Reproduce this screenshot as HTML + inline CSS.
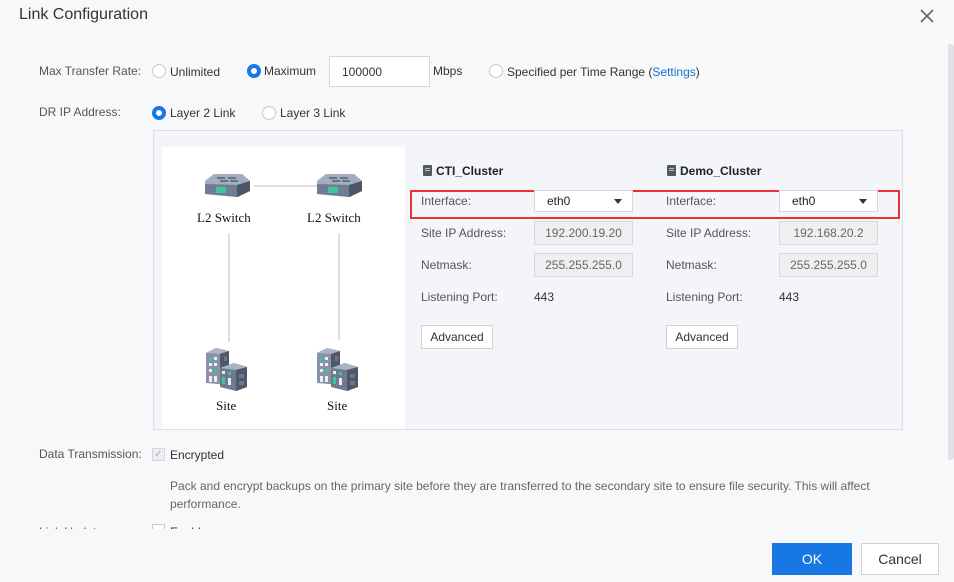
<!DOCTYPE html>
<html><head><meta charset="utf-8"><style>
*{box-sizing:border-box;margin:0;padding:0}
body{width:954px;height:582px;overflow:hidden;background:#f7f8fa;font-family:"Liberation Sans",Arial,sans-serif;font-size:12px;color:#333;position:relative}
.a{position:absolute;white-space:nowrap}
.title{left:19px;top:6px;font-size:16px;color:#333}
.lbl{color:#555}
.radio{position:absolute;width:14px;height:14px;border:1px solid #c5c8ce;border-radius:50%;background:#fff}
.radio.on{border:4px solid #1677e5}
.inp{position:absolute;border:1px solid #d4d7dd;background:#fff;height:31px;padding:0 12px;line-height:30px}
.dis{position:absolute;border:1px solid #d4d7dd;background:#eeeff1;height:24px;width:99px;line-height:22px;text-align:center;color:#666}
.sel{position:absolute;border:1px solid #d4d7dd;background:#fff;height:22px;width:99px;line-height:20px;padding-left:12px;color:#222}
.sel:after{content:"";position:absolute;right:10px;top:8px;border:4px solid transparent;border-top:5px solid #333;border-bottom:0}
.btn{position:absolute;border:1px solid #cfd2d8;background:#fff;height:24px;width:72px;line-height:22px;text-align:center;color:#333}
.srv{display:inline-block;width:9px;height:11px;background:#505863;border-radius:1px;vertical-align:-1px;margin-right:4px;position:relative}
.srv:after{content:"";position:absolute;left:2px;top:3px;width:5px;height:1px;background:#bbb;box-shadow:0 2px 0 #bbb}
.serif{font-family:"Liberation Serif",serif;font-size:13px;color:#111}
</style></head><body>
<div class="a title">Link Configuration</div>
<svg class="a" style="left:920px;top:9px" width="14" height="14"><path d="M1 1L13 13M13 1L1 13" stroke="#666" stroke-width="1.6"/></svg>
<div class="a" style="left:948px;top:44px;width:6px;height:416px;background:#dfe1e5;border-radius:3px"></div>

<div class="a lbl" style="left:39px;top:64px">Max Transfer Rate:</div>
<div class="radio" style="left:152px;top:64px"></div><div class="a" style="left:170px;top:65px">Unlimited</div>
<div class="radio on" style="left:247px;top:64px"></div><div class="a" style="left:264px;top:64px">Maximum</div>
<div class="inp" style="left:329px;top:56px;width:101px">100000</div>
<div class="a" style="left:433px;top:64px">Mbps</div>
<div class="radio" style="left:489px;top:64px"></div><div class="a" style="left:507px;top:65px">Specified per Time Range (<span style="color:#1a6fd0">Settings</span>)</div>

<div class="a lbl" style="left:39px;top:105px">DR IP Address:</div>
<div class="radio on" style="left:152px;top:106px"></div><div class="a" style="left:170px;top:106px">Layer 2 Link</div>
<div class="radio" style="left:262px;top:106px"></div><div class="a" style="left:280px;top:106px">Layer 3 Link</div>

<div class="a" style="left:153px;top:130px;width:750px;height:300px;background:#f3f5f9;border:1px solid #dcdfe6"></div>
<div class="a" style="left:162px;top:147px;width:243px;height:282px;background:#fff"></div>
<svg class="a" style="left:162px;top:147px" width="243" height="282">
<line x1="92" y1="39" x2="158" y2="39" stroke="#d0d3da" stroke-width="1.5"/>
<line x1="67" y1="86" x2="67" y2="195" stroke="#d0d3da" stroke-width="1.5"/>
<line x1="177" y1="86" x2="177" y2="193" stroke="#d0d3da" stroke-width="1.5"/>
<g id="sw"><polygon points="43,34 52,27 80,27 88,34 88,44 76,50 43,47" fill="#8e9bb0"/><polygon points="43,34 52,27 80,27 88,34 75,38 43,37" fill="#a2aec0"/><path d="M55 31h8M66 31h8M58 34h8M68 34h8" stroke="#556073" stroke-width="1.6"/><polygon points="43,37 75,38 75,50 43,47" fill="#6f7c92"/><polygon points="75,38 88,34 88,44 75,50" fill="#4d5566"/><rect x="54" y="40" width="10" height="6" fill="#3cc79a"/></g>
<use href="#sw" x="112"/>
<g id="bd"><polygon points="44,206 54,201 67,204 67,238 44,236" fill="#8793a8"/><polygon points="44,206 54,201 67,204 58,207" fill="#a9b3c4"/><polygon points="58,207 67,204 67,238 58,239" fill="#4f5768"/><polygon points="58,221 72,216 85,220 85,240 74,244 58,240" fill="#6d7a90"/><polygon points="58,221 72,216 85,220 74,223" fill="#a9b3c4"/><polygon points="74,223 85,220 85,240 74,244" fill="#4f5768"/><rect x="62" y="209" width="3" height="5" fill="#6d7688"/><rect x="77" y="227" width="5" height="4" fill="#6d7688"/><rect x="77" y="234" width="5" height="4" fill="#6d7688"/><rect x="47" y="210" width="3" height="3" fill="#3cc79a"/><rect x="52" y="210" width="3" height="3" fill="#eee"/><rect x="47" y="216" width="3" height="3" fill="#eee"/><rect x="52" y="216" width="3" height="3" fill="#eee"/><rect x="47" y="222" width="3" height="3" fill="#eee"/><rect x="52" y="222" width="3" height="3" fill="#3cc79a"/><rect x="60" y="224" width="3" height="3" fill="#eee"/><rect x="66" y="225" width="3" height="3" fill="#3cc79a"/><rect x="47" y="229" width="3" height="6" fill="#eee"/><rect x="52" y="229" width="3" height="6" fill="#eee"/><rect x="60" y="230" width="3" height="7" fill="#3cc79a"/><rect x="66" y="231" width="3" height="7" fill="#eee"/></g>
<use href="#bd" x="111"/>
</svg>
<div class="a serif" style="left:197px;top:210px">L2 Switch</div>
<div class="a serif" style="left:307px;top:210px">L2 Switch</div>
<div class="a serif" style="left:216px;top:398px">Site</div>
<div class="a serif" style="left:327px;top:398px">Site</div>

<div class="a" style="left:423px;top:164px;font-weight:bold;color:#222"><span class="srv"></span>CTI_Cluster</div>
<div class="a" style="left:667px;top:164px;font-weight:bold;color:#222"><span class="srv"></span>Demo_Cluster</div>
<div class="a" style="left:410px;top:190px;width:490px;height:29px;border:2px solid #e8323a"></div>
<div class="a lbl" style="left:421px;top:194px">Interface:</div><div class="sel" style="left:534px;top:190px">eth0</div>
<div class="a lbl" style="left:666px;top:194px">Interface:</div><div class="sel" style="left:779px;top:190px">eth0</div>
<div class="a lbl" style="left:421px;top:226px">Site IP Address:</div><div class="dis" style="left:534px;top:221px">192.200.19.20</div>
<div class="a lbl" style="left:666px;top:226px">Site IP Address:</div><div class="dis" style="left:779px;top:221px">192.168.20.2</div>
<div class="a lbl" style="left:421px;top:258px">Netmask:</div><div class="dis" style="left:534px;top:253px">255.255.255.0</div>
<div class="a lbl" style="left:666px;top:258px">Netmask:</div><div class="dis" style="left:779px;top:253px">255.255.255.0</div>
<div class="a lbl" style="left:421px;top:290px">Listening Port:</div><div class="a" style="left:534px;top:290px">443</div>
<div class="a lbl" style="left:666px;top:290px">Listening Port:</div><div class="a" style="left:779px;top:290px">443</div>
<div class="btn" style="left:421px;top:325px">Advanced</div>
<div class="btn" style="left:666px;top:325px">Advanced</div>

<div class="a lbl" style="left:39px;top:447px">Data Transmission:</div>
<div class="a" style="left:152px;top:448px;width:13px;height:13px;border:1px solid #d4d7dd;background:#eceef1;color:#aaa;font-size:10px;line-height:11px;text-align:center">✓</div>
<div class="a" style="left:170px;top:448px">Encrypted</div>
<div class="a" style="left:170px;top:477px;color:#666;line-height:18px;white-space:normal;width:720px">Pack and encrypt backups on the primary site before they are transferred to the secondary site to ensure file security. This will affect performance.</div>
<div class="a" style="left:0;top:519px;width:945px;height:10px;overflow:hidden"><div style="position:absolute;left:39px;top:6px;color:#555">Link Update:</div><div style="position:absolute;left:152px;top:5px;width:13px;height:13px;border:1px solid #c5c8ce;background:#fff"></div><div style="position:absolute;left:170px;top:6px">Enable</div></div>

<div class="a" style="left:772px;top:543px;width:80px;height:32px;background:#1677e5;color:#fff;font-size:14px;line-height:32px;text-align:center">OK</div>
<div class="a" style="left:861px;top:543px;width:78px;height:32px;background:#fff;border:1px solid #cfd2d8;color:#333;font-size:14px;line-height:30px;text-align:center">Cancel</div>
</body></html>
